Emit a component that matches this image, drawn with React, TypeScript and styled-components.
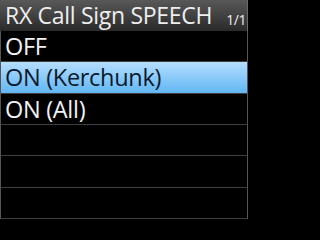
import styled, { createGlobalStyle, css } from 'styled-components';

interface RowProps {
  selected?: boolean;
}

const options = ['OFF', 'ON (Kerchunk)', 'ON (All)', '', '', ''];

const App = () => {
  return (
    <>
      <GlobalStyle />
      <Screen>
        <Header>
          <Title>RX Call Sign SPEECH</Title>
          <Page>1/1</Page>
        </Header>
        <List>
          {options.map((label, i) => (
            <Row key={i} selected={i === 1}>
              {label}
            </Row>
          ))}
        </List>
      </Screen>
    </>
  );
};

export default App;

// Styles
const GlobalStyle = createGlobalStyle`
  html, body {
    margin: 0;
    padding: 0;
    background: #000;
  }
`;

const Screen = styled.div`
  width: 250px;
  height: 219px;
  background: #000;
  font-family: 'Open Sans', 'Noto Sans', sans-serif;
  display: flex;
  flex-direction: column;
  overflow: hidden;
`;

const Header = styled.div`
  flex: 0 0 31px;
  width: 248px;
  box-sizing: border-box;
  display: flex;
  align-items: flex-end;
  justify-content: space-between;
  padding: 0 1px 4px 5px;
  background: linear-gradient(#585858, #2a2a2a);
  color: #eee;
  border-right: 1px solid #6a6a6a;
`;

const Title = styled.span`
  font-size: 23px;
  line-height: 23px;
  letter-spacing: -0.3px;
  white-space: nowrap;
`;

const Page = styled.span`
  font-size: 14px;
  line-height: 14px;
  letter-spacing: -0.5px;
`;

const List = styled.div`
  flex: 1;
  min-height: 0;
  display: grid;
  grid-template-rows: repeat(6, minmax(0, 1fr));
  width: 248px;
  box-sizing: border-box;
  border-left: 1px solid #555;
  border-right: 1px solid #555;
`;

const Row = styled.div<RowProps>`
  display: flex;
  align-items: center;
  padding-left: 4px;
  font-size: 23.5px;
  line-height: 24px;
  letter-spacing: -0.3px;
  white-space: nowrap;
  color: #f2f2f2;
  border-bottom: 1px solid #3e3e3e;
  ${(props) =>
    props.selected &&
    css`
      background: linear-gradient(#b4deff, #62b6f2);
      color: #0a1a2e;
    `};
`;
